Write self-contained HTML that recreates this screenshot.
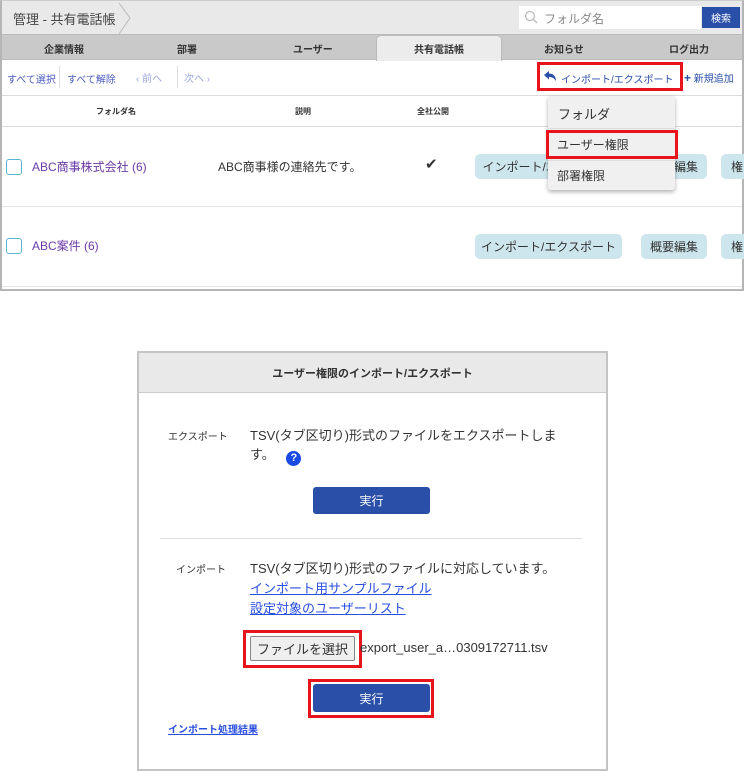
<!DOCTYPE html><html><head><meta charset="utf-8"><style>
*{box-sizing:border-box;margin:0;padding:0}
body{width:744px;height:768px;background:#fff;position:relative;font-family:"Liberation Sans","Noto Sans CJK JP",sans-serif;color:#333;overflow:hidden}
.a{position:absolute}
.btn{background:#cde6ee;border-radius:5px;color:#333;font-size:12px;display:flex;align-items:center;justify-content:center;white-space:nowrap}
.red{border:3px solid #e8141c}
.cb{width:16px;height:16px;border:1.5px solid #5ab6d0;border-radius:3px}
</style></head><body>
<div class="a" style="left:0;top:0;width:744px;height:291px;border:2px solid #b5b5b5;border-top:1px solid #ccc"></div>
<div class="a" style="left:2px;top:1px;width:740px;height:34px;background:#e9e9e9;border-bottom:1px solid #bbb"></div>
<div class="a" style="left:13px;top:9px;font-size:13px;color:#444">管理 - 共有電話帳</div>
<svg class="a" style="left:118px;top:2px" width="14" height="33"><path d="M1 1 L12 16 L1 32" fill="none" stroke="#bbb"/></svg>
<div class="a" style="left:519px;top:6px;width:182px;height:23px;background:#fff"></div>
<svg class="a" style="left:524px;top:10px" width="14" height="14"><circle cx="6" cy="6" r="4.5" fill="none" stroke="#bbb" stroke-width="1.3"/><path d="M9.5 9.5 L13 13" stroke="#bbb" stroke-width="1.3"/></svg>
<div class="a" style="left:544px;top:10px;font-size:12px;color:#888">フォルダ名</div>
<div class="a" style="left:702px;top:7px;width:38px;height:21px;background:#2a4fa8;color:#fff;font-size:10px;display:flex;align-items:center;justify-content:center">検索</div>
<div class="a" style="left:2px;top:35px;width:740px;height:25px;background:#c9c9c9;border-bottom:1px solid #bbb"></div>
<div class="a" style="left:376px;top:35px;width:126px;height:26px;background:#ececec;border:1px solid #bbb;border-bottom:none;border-radius:5px 5px 0 0"></div>
<div class="a" style="top:41px;left:0;width:744px;font-size:10px;font-weight:bold;color:#333">
<span class="a" style="left:44px">企業情報</span><span class="a" style="left:177px">部署</span><span class="a" style="left:293px">ユーザー</span><span class="a" style="left:414px">共有電話帳</span><span class="a" style="left:544px">お知らせ</span><span class="a" style="left:669px">ログ出力</span></div>
<div class="a" style="left:2px;top:61px;width:740px;height:35px;border-bottom:1px solid #ddd"></div>
<div class="a" style="top:71px;left:7px;font-size:10px;color:#4a5cc0">すべて選択</div>
<div class="a" style="left:59px;top:66px;width:1px;height:22px;background:#ddd"></div>
<div class="a" style="top:71px;left:67px;font-size:10px;color:#4a5cc0">すべて解除</div>
<div class="a" style="top:70px;left:136px;font-size:10px;color:#9aa6dd">‹ 前へ</div>
<div class="a" style="left:177px;top:66px;width:1px;height:22px;background:#ddd"></div>
<div class="a" style="top:70px;left:184px;font-size:10px;color:#9aa6dd">次へ ›</div>
<div class="a red" style="left:537px;top:62px;width:146px;height:29px"></div>
<svg class="a" style="left:544px;top:71px" width="13" height="10"><path d="M0 4 L5 0 L5 2.5 C9 2.5 12 5 12 10 C10 7 8 6 5 6 L5 8.5 Z" fill="#2a4fa8"/></svg>
<div class="a" style="top:71px;left:561px;font-size:10px;color:#2a4fa8">インポート/エクスポート</div>
<div class="a" style="top:70px;left:684px;font-size:10px;color:#2a4fa8"><b style="font-size:12px">+</b> 新規追加</div>
<div class="a" style="left:2px;top:96px;width:740px;height:31px;border-bottom:1px solid #ddd"></div>
<div class="a" style="top:106px;left:96px;font-size:8px;font-weight:bold">フォルダ名</div>
<div class="a" style="top:106px;left:295px;font-size:8px;font-weight:bold">説明</div>
<div class="a" style="top:106px;left:417px;font-size:8px;font-weight:bold">全社公開</div>
<div class="a" style="left:2px;top:206px;width:740px;height:1px;background:#e5e5e5"></div>
<div class="a" style="left:2px;top:286px;width:740px;height:1px;background:#e5e5e5"></div>
<div class="a cb" style="left:6px;top:159px"></div>
<div class="a" style="left:32px;top:158px;font-size:12px;color:#6a3aa8">ABC商事株式会社 (6)</div>
<div class="a" style="left:218px;top:158px;font-size:12px">ABC商事様の連絡先です。</div>
<div class="a" style="left:425px;top:155px;font-size:15px">✔</div>
<div class="a btn" style="left:475px;top:154px;width:150px;height:25px">インポート/エクスポート</div>
<div class="a btn" style="left:641px;top:154px;width:66px;height:25px">概要編集</div>
<div class="a btn" style="left:721px;top:154px;width:30px;height:25px;justify-content:flex-start;padding-left:10px">権</div>
<div class="a cb" style="left:6px;top:238px"></div>
<div class="a" style="left:32px;top:237px;font-size:12px;color:#6a3aa8">ABC案件 (6)</div>
<div class="a btn" style="left:475px;top:234px;width:147px;height:25px">インポート/エクスポート</div>
<div class="a btn" style="left:641px;top:234px;width:66px;height:25px">概要編集</div>
<div class="a btn" style="left:721px;top:234px;width:30px;height:25px;justify-content:flex-start;padding-left:10px">権</div>
<div class="a" style="left:548px;top:96px;width:127px;height:94px;background:#f0f0f0;border-radius:3px;box-shadow:0 2px 4px rgba(0,0,0,.3)"></div>
<div class="a" style="left:558px;top:104px;font-size:13px">フォルダ</div>
<div class="a" style="left:548px;top:128px;width:127px;height:1px;background:#ddd"></div>
<div class="a red" style="left:546px;top:130px;width:132px;height:29px"></div>
<div class="a" style="left:557px;top:136px;font-size:12px">ユーザー権限</div>
<div class="a" style="left:548px;top:160px;width:127px;height:1px;background:#ddd"></div>
<div class="a" style="left:557px;top:167px;font-size:12px">部署権限</div>

<div class="a" style="left:137px;top:351px;width:471px;height:420px;border:2px solid #c4c4c4"></div>
<div class="a" style="left:139px;top:353px;width:467px;height:40px;background:#e9e9e9;border-bottom:1px solid #ccc"></div>
<div class="a" style="left:139px;top:365px;width:467px;text-align:center;font-size:11px;font-weight:bold">ユーザー権限のインポート/エクスポート</div>
<div class="a" style="left:168px;top:428px;font-size:10px">エクスポート</div>
<div class="a" style="left:250px;top:426px;width:320px;font-size:13px;line-height:19px">TSV(タブ区切り)形式のファイルをエクスポートします。 <span style="display:inline-block;width:15px;height:15px;border-radius:50%;background:#1a4ae6;color:#fff;font-size:11px;font-weight:bold;text-align:center;line-height:15px;margin-left:8px;vertical-align:-2px">?</span></div>
<div class="a" style="left:313px;top:487px;width:117px;height:27px;background:#2a4fa8;border-radius:3px;color:#fff;font-size:12px;display:flex;align-items:center;justify-content:center">実行</div>
<div class="a" style="left:160px;top:538px;width:422px;height:1px;background:#ddd"></div>
<div class="a" style="left:176px;top:561px;font-size:10px">インポート</div>
<div class="a" style="left:250px;top:559px;font-size:13px;line-height:20px">TSV(タブ区切り)形式のファイルに対応しています。<br><span style="color:#2a4fe0;text-decoration:underline">インポート用サンプルファイル</span><br><span style="color:#2a4fe0;text-decoration:underline">設定対象のユーザーリスト</span></div>
<div class="a red" style="left:243px;top:630px;width:119px;height:38px"></div>
<div class="a" style="left:250px;top:636px;width:105px;height:25px;background:#efefef;border:1px solid #888;border-radius:2px;font-size:13px;display:flex;align-items:center;justify-content:center">ファイルを選択</div>
<div class="a" style="left:360px;top:640px;font-size:13px">export_user_a…0309172711.tsv</div>
<div class="a red" style="left:308px;top:679px;width:126px;height:39px"></div>
<div class="a" style="left:313px;top:684px;width:117px;height:28px;background:#2a4fa8;border-radius:3px;color:#fff;font-size:12px;display:flex;align-items:center;justify-content:center">実行</div>
<div class="a" style="left:168px;top:721px;font-size:10px;font-weight:bold;color:#2a4fe0;text-decoration:underline">インポート処理結果</div>
</body></html>
